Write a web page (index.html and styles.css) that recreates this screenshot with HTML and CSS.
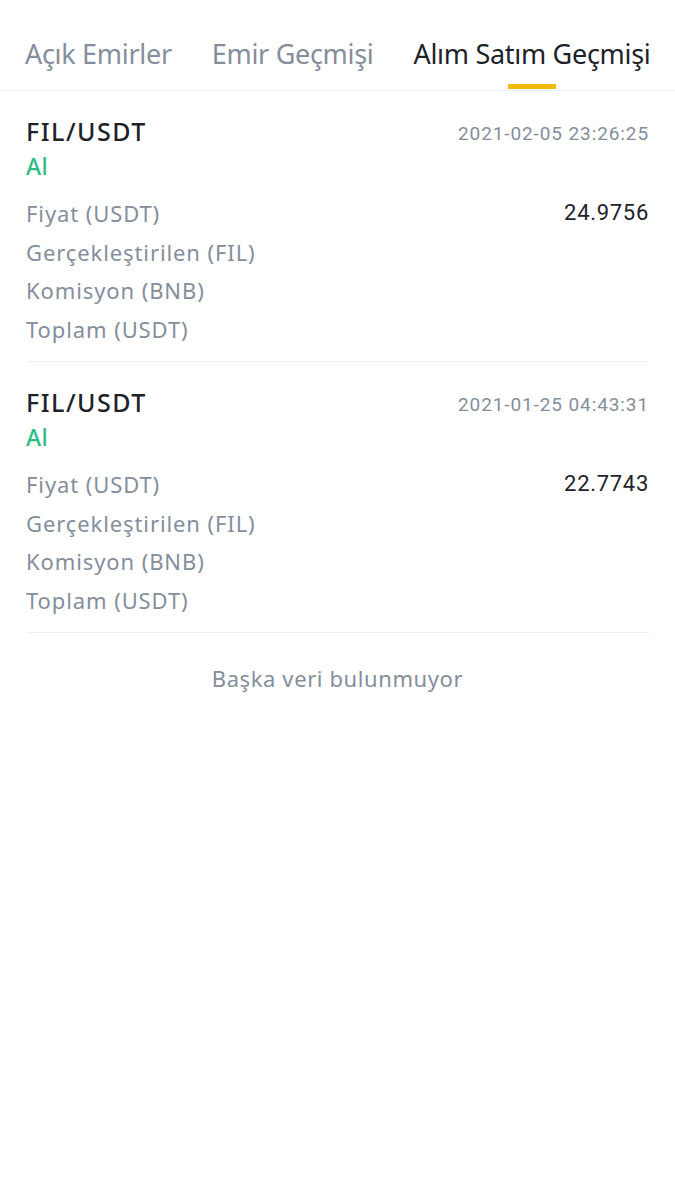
FILE: index.html
```html
<!DOCTYPE html>
<html lang="tr">
<head>
<meta charset="utf-8">
<title>Alım Satım Geçmişi</title>
<link rel="stylesheet" href="styles.css">
</head>
<body>
<div class="page">
  <nav class="tabs">
    <div class="tab">Açık Emirler</div>
    <div class="tab">Emir Geçmişi</div>
    <div class="tab active">Alım Satım Geçmişi</div>
  </nav>
  <div class="list">
    <section class="card">
      <div class="head">
        <div class="pair">FIL/USDT</div>
        <div class="date">2021-02-05 23:26:25</div>
      </div>
      <div class="side">Al</div>
      <div class="rows">
        <div class="row"><span class="label">Fiyat (USDT)</span><span class="value">24.9756</span></div>
        <div class="row"><span class="label">Gerçekleştirilen (FIL)</span><span class="value"></span></div>
        <div class="row"><span class="label">Komisyon (BNB)</span><span class="value"></span></div>
        <div class="row"><span class="label">Toplam (USDT)</span><span class="value"></span></div>
      </div>
    </section>
    <section class="card">
      <div class="head">
        <div class="pair">FIL/USDT</div>
        <div class="date">2021-01-25 04:43:31</div>
      </div>
      <div class="side">Al</div>
      <div class="rows">
        <div class="row"><span class="label">Fiyat (USDT)</span><span class="value">22.7743</span></div>
        <div class="row"><span class="label">Gerçekleştirilen (FIL)</span><span class="value"></span></div>
        <div class="row"><span class="label">Komisyon (BNB)</span><span class="value"></span></div>
        <div class="row"><span class="label">Toplam (USDT)</span><span class="value"></span></div>
      </div>
    </section>
    <div class="footer">Başka veri bulunmuyor</div>
  </div>
</div>
</body>
</html>
```
FILE: styles.css
```css
* { box-sizing: border-box; }
html, body { margin: 0; padding: 0; background: #ffffff; }
body {
  font-family: "Noto Sans", "Open Sans", sans-serif;
  color: #1e2329;
}
.page { width: 675px; }
.tabs {
  display: flex;
  gap: 40px;
  height: 91px;
  padding: 0 0 0 25px;
  border-bottom: 1px solid #eeeff2;
}
.tab {
  position: relative;
  font-size: 27px;
  line-height: 36px;
  padding-top: 36px;
  color: #848e9c;
  white-space: nowrap;
  letter-spacing: -0.3px;
}
.tab.active { color: #1e2329; }
.tab.active::after {
  content: "";
  position: absolute;
  left: 50%;
  margin-left: -24px;
  width: 48px;
  height: 5px;
  top: 84px;
  background: #f0b90b;
}
.list { padding: 0 26px; }
.card {
  height: 271px;
  padding-top: 23px;
  border-bottom: 1px solid #eeeff2;
}
.head {
  display: flex;
  justify-content: space-between;
  align-items: center;
  height: 34px;
}
.pair {
  font-size: 25px;
  font-weight: 500;
  letter-spacing: 1.5px;
  color: #1e2329;
}
.date {
  font-family: "Roboto", sans-serif;
  font-size: 19px;
  color: #848e9c;
  padding-top: 4px;
  letter-spacing: 0.9px;
}
.side {
  font-size: 23px;
  line-height: 36px;
  font-weight: 500;
  letter-spacing: 0.5px;
  color: #2ebd85;
}
.rows { margin-top: 10px; }
.row {
  display: flex;
  justify-content: space-between;
  height: 38.7px;
  line-height: 38.7px;
}
.label {
  font-size: 22px;
  letter-spacing: 0.9px;
  color: #848e9c;
}
.value {
  font-family: "Roboto", sans-serif;
  font-size: 22px;
  color: #1e2329;
  letter-spacing: 0.7px;
}
.footer {
  text-align: center;
  font-size: 22px;
  letter-spacing: 0.6px;
  color: #848e9c;
  line-height: 30px;
  padding-top: 30px;
}
```
